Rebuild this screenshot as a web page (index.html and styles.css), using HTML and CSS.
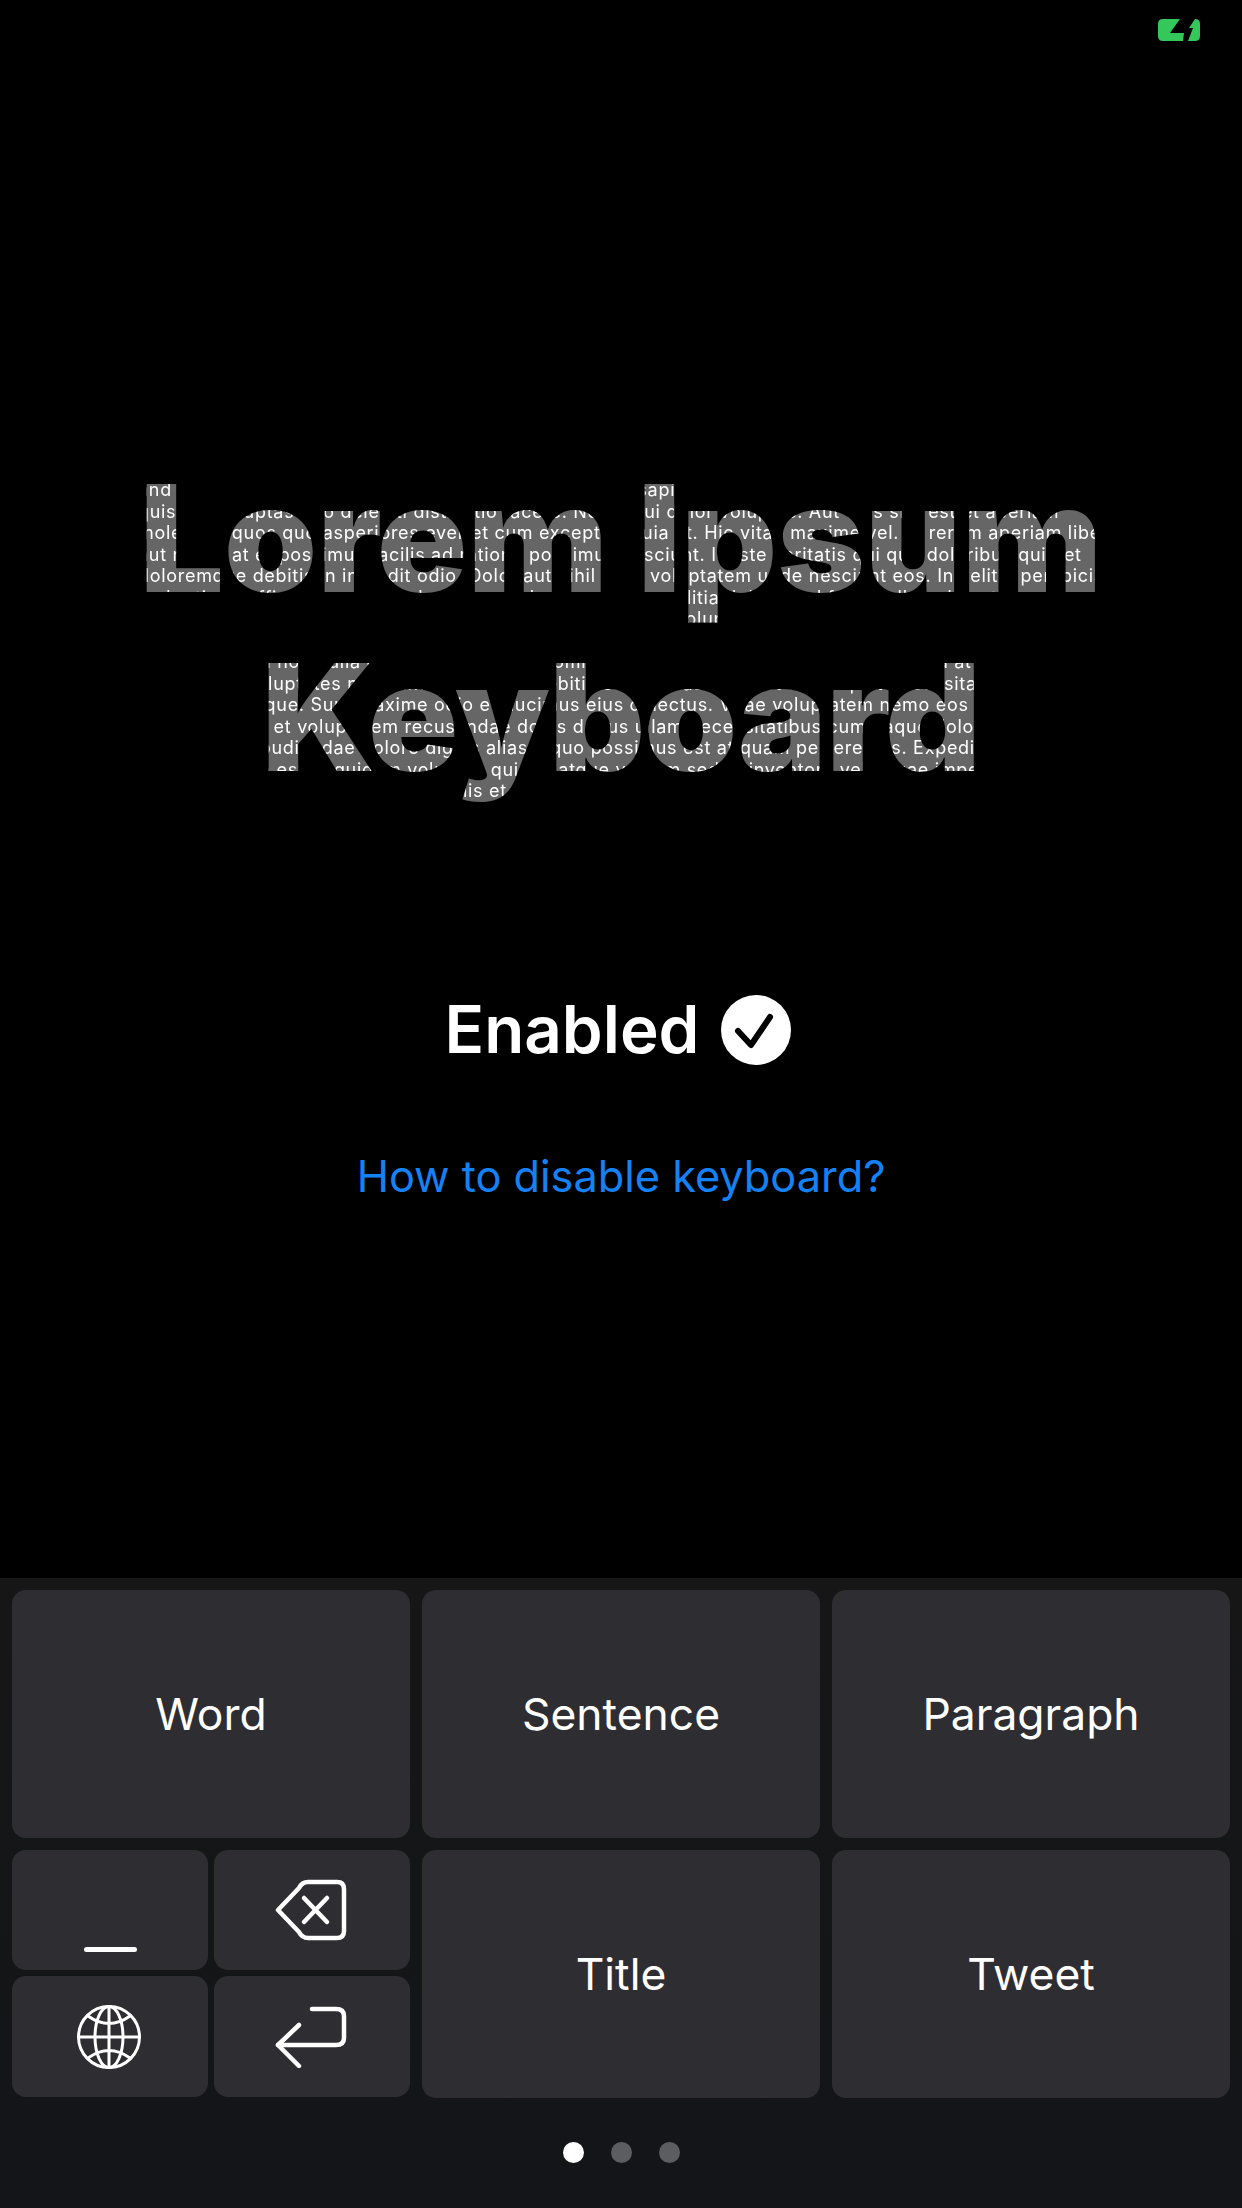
FILE: index.html
```html
<html>
    <head>
        <title>Lorem Ipsum Keyboard</title>
        <link rel="stylesheet" href="styles.css">
    </head>
    <body>
        <div class="status-bar">
            <svg class="battery" viewBox="0 0 42 22">
                <path fill="#34c759" d="M5 0H22L12 14H26L25 22H5Q0 22 0 17V5Q0 0 5 0ZM37 0Q42 0 42 5V17Q42 22 37 22H30L35 9H31Z"/>
            </svg>
        </div>

        <div class="main">
            <div class="title-mask">
                <h1 class="title">Lorem Ipsum<br><span class="title-second">Keyboard</span></h1>
                <div class="lorem">
                    <div>and et nesciunt quia dolores quasi nulla rem quia quis sapiente autem a</div>
                    <div>quis aut voluptas quo deleniti distinctio facere. Nemo qui dolor voluptas. Aut eius sint est et aperiam</div>
                    <div>molestiae quos quo asperiores ever et cum excepturi quia at. Hic vitae maxime vel. Et rerum aperiam libero</div>
                    <div>aut rerum at et possimus facilis ad ratione possimus nesciunt. Id iste veritatis qui quo doloribus quid et</div>
                    <div>doloremque debitis in incredit odio. Dolor aut nihil esse voluptatem unde nesciunt eos. In velit a perspiciatis</div>
                    <div>sed ratione officiis iure quo dolores eos voluptas et sint mollitia dolores ad fugiat ullam delectus</div>
                    <div>magni ipsa dolor sit amet consequatur eaque non quis aut voluptas</div>
                    <div>&nbsp;</div>
                    <div>Quidem harum non nulla et quia sit voluptate omnis eligendi quae sed ut enim ad minima at non</div>
                    <div>Est quos et voluptates nesciunt dolor quae debitis et voluptas sit amet consequat necessitatibus</div>
                    <div>Quis neque atque. Sunt maxime odio et ducimus eius delectus. Vitae voluptatem nemo eos est</div>
                    <div>Beatae sed sit et voluptatem recusandae dolos debus ullam necessitatibus cum eaque dolor</div>
                    <div>Quia et illo repudiandae dolore dignis alias a quo possimus est at quam perferendis. Expedita</div>
                    <div>Deserunt enim est et quidem voluptas quis et atque veniam sed at inventore velit quae impedit</div>
                    <div class="lorem-last">lis et</div>
                </div>
            </div>

            <div class="enabled">
                <span>Enabled</span>
                <svg class="check" viewBox="0 0 70 70">
                    <circle cx="35" cy="35" r="35" fill="#fff"/>
                    <path d="M17 36L30 50L49 22" fill="none" stroke="#000" stroke-width="6" stroke-linecap="round" stroke-linejoin="round"/>
                </svg>
            </div>

            <a class="link">How to disable keyboard?</a>
        </div>

        <div class="keyboard">
            <div class="key-row">
                <div class="key">Word</div>
                <div class="key">Sentence</div>
                <div class="key">Paragraph</div>
            </div>
            <div class="key-row">
                <div class="small-keys">
                    <div class="key small space-key"><span class="space-bar"></span></div>
                    <div class="key small">
                        <svg class="icon" viewBox="0 0 72 62" fill="none" stroke="#fff" stroke-width="4.5" stroke-linecap="round" stroke-linejoin="round">
                            <path d="M3 31L24 9Q27 3 33 3H62Q69 3 69 10V52Q69 59 62 59H33Q27 59 24 53Z"/>
                            <path d="M29 19L52 43M52 19L29 43"/>
                        </svg>
                    </div>
                    <div class="key small">
                        <svg class="icon globe" viewBox="0 0 64 64" fill="none" stroke="#fff" stroke-width="3">
                            <circle cx="32" cy="32" r="30.5"/>
                            <ellipse cx="32" cy="32" rx="14" ry="30.5"/>
                            <path d="M32 2V62M2 32H62M11 11Q32 26 53 11M11 53Q32 38 53 53"/>
                        </svg>
                    </div>
                    <div class="key small">
                        <svg class="icon" viewBox="0 0 72 62" fill="none" stroke="#fff" stroke-width="4.5" stroke-linecap="round" stroke-linejoin="round">
                            <path d="M37 3H61Q69 3 69 10V32Q69 39 61 39H3"/>
                            <path d="M24 19L3 39L24 60"/>
                        </svg>
                    </div>
                </div>
                <div class="key">Title</div>
                <div class="key">Tweet</div>
            </div>
            <div class="dots">
                <span class="dot active"></span>
                <span class="dot"></span>
                <span class="dot"></span>
            </div>
        </div>
    </body>
</html>
```

FILE: styles.css
```css
body {
    margin: 0;
    width: 1242px;
    height: 2208px;
    display: flex;
    flex-direction: column;
    background-color: #000;
    color: #fff;
    font-family: Inter, "Noto Sans", sans-serif;
    overflow: hidden;
}

.status-bar {
    height: 19px;
    padding-right: 42px;
    display: flex;
    justify-content: flex-end;
}

.battery {
    width: 42px;
    height: 22px;
    margin-top: 19px;
}

.main {
    flex: 1;
    padding-top: 430px;
    display: flex;
    flex-direction: column;
    align-items: center;
}

/* small text only shows through the big letters */
.title-mask {
    position: relative;
    isolation: isolate;
    width: 1242px;
    background-color: #000;
}

.title {
    margin: 0;
    font-size: 149px;
    line-height: 179px;
    font-weight: 900;
    text-align: center;
    color: #fff;
}

.title-second {
    letter-spacing: -0.9px;
}

.lorem {
    position: absolute;
    top: 0;
    bottom: 0;
    left: 0;
    right: 0;
    padding-top: 30px;
    padding-left: 138px;
    background-color: #666;
    mix-blend-mode: multiply;
    font-size: 18px;
    line-height: 21.5px;
    letter-spacing: 0.7px;
    white-space: nowrap;
    overflow: hidden;
}

.lorem-last {
    padding-left: 325px;
}

.enabled {
    margin-top: 188px;
    margin-right: 6px;
    display: flex;
    align-items: center;
    gap: 22px;
    font-size: 65.5px;
    font-weight: 600;
    line-height: 70px;
}

.check {
    width: 70px;
    height: 70px;
}

.link {
    margin-top: 84px;
    font-size: 43.3px;
    font-weight: 380;
    line-height: 54px;
    color: #1482f5;
}

.keyboard {
    height: 630px;
    box-sizing: border-box;
    padding: 12px 12px 0;
    display: flex;
    flex-direction: column;
    gap: 12px;
    background: linear-gradient(#161617, #131518);
}

.key-row {
    display: grid;
    grid-template-columns: repeat(3, 398px);
    gap: 12px;
    height: 248px;
}

.key {
    display: flex;
    justify-content: center;
    align-items: center;
    border-radius: 14px;
    background-color: #2d2d32;
    font-size: 44.4px;
    font-weight: 380;
}

.small-keys {
    display: grid;
    grid-template-columns: 196px 196px;
    grid-template-rows: 120px 121px;
    gap: 6px;
}

.space-key {
    align-items: flex-end;
    padding-bottom: 18px;
    box-sizing: border-box;
}

.space-bar {
    width: 53px;
    height: 5px;
    border-radius: 3px;
    background-color: #fff;
}

.icon {
    width: 72px;
    height: 62px;
    margin-right: 2px;
}

.globe {
    width: 64px;
    height: 64px;
}

.dots {
    margin-top: 32px;
    display: flex;
    justify-content: center;
    gap: 27px;
}

.dot {
    width: 21px;
    height: 21px;
    border-radius: 50%;
    background-color: #5c5d60;
}

.dot.active {
    background-color: #fff;
}
```
